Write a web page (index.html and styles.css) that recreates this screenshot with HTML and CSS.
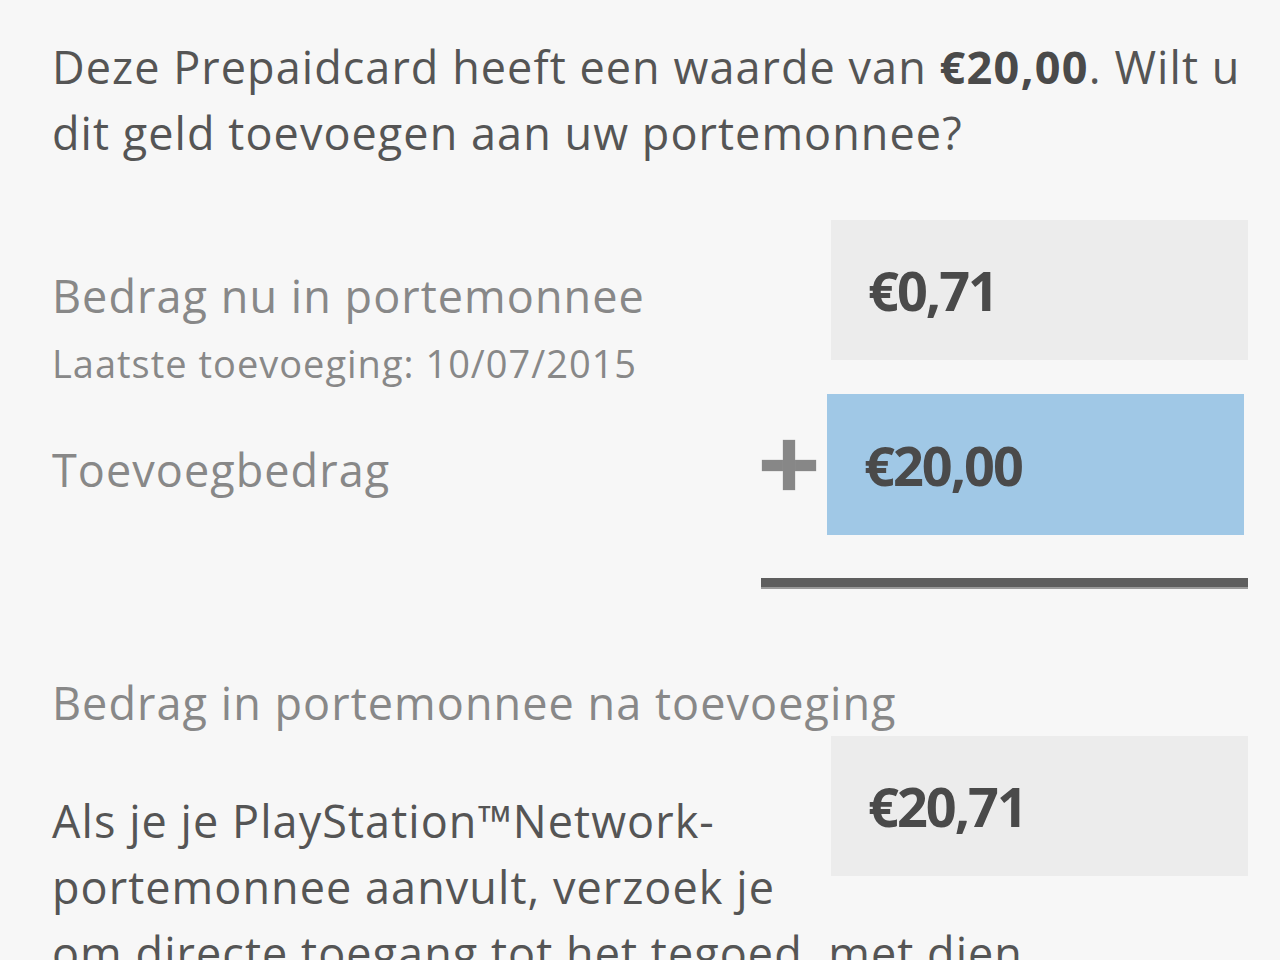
FILE: index.html
```html
<!DOCTYPE html>
<html lang="nl">
<head>
<meta charset="utf-8">
<title>Prepaidcard</title>
<link rel="stylesheet" href="styles.css">
</head>
<body>
<main class="page">
  <p class="intro">Deze Prepaidcard heeft een waarde van <strong>€20,00</strong>. Wilt u dit geld toevoegen aan uw portemonnee?</p>

  <div class="row row-current">
    <div class="label-block">
      <div class="label">Bedrag nu in portemonnee</div>
      <div class="sublabel">Laatste toevoeging: 10/07/2015</div>
    </div>
    <div class="amount amount-grey">€0,71</div>
  </div>

  <div class="row row-add">
    <div class="label-block">
      <div class="label">Toevoegbedrag</div>
    </div>
    <div class="add-wrap">
      <span class="plus" aria-hidden="true"></span>
      <div class="amount amount-blue">€20,00</div>
    </div>
  </div>

  <div class="sum-line"></div>

  <div class="label label-after">Bedrag in portemonnee na toevoeging</div>
  <div class="amount amount-grey amount-float">€20,71</div>
  <p class="note">Als je je PlayStation™Network-portemonnee aanvult, verzoek je om directe toegang tot het tegoed, met dien verstande dat je afstand doet van je herroepingsrecht.</p>
</main>
</body>
</html>
```

FILE: styles.css
```css
html, body {
  margin: 0;
  padding: 0;
  background: #f7f7f7;
  overflow: hidden;
}

.page {
  font-family: "Open Sans", "Liberation Sans", sans-serif;
  font-size: 45px;
  line-height: 66px;
  letter-spacing: 1.05px;
  color: #555555;
  padding: 34px 32px 0 52px;
}

.intro {
  margin: 0;
}

.intro strong {
  font-weight: 700;
  letter-spacing: 1.3px;
  color: #4a4a4a;
}

.row {
  display: flex;
  justify-content: space-between;
  align-items: flex-start;
}

.row-current {
  margin-top: 54px;
}

.row-add {
  margin-top: 9px;
}

.label-block {
  padding-top: 43px;
}

.label {
  color: #888888;
}

.sublabel {
  font-size: 38px;
  line-height: 44px;
  letter-spacing: 1px;
  margin-top: 12px;
  color: #888888;
}

.amount {
  box-sizing: border-box;
  width: 417px;
  height: 140px;
  padding-left: 37px;
  display: flex;
  align-items: center;
  font-weight: 700;
  font-size: 54px;
  letter-spacing: -2px;
  color: #4a4a4a;
}

.amount-grey {
  background: #ececec;
}

.amount-blue {
  background: #a0c8e6;
  height: 141px;
}

.add-wrap {
  display: flex;
  align-items: center;
  margin-right: 4px;
}

.plus {
  position: relative;
  width: 54px;
  height: 50px;
  margin-right: 11px;
}

.plus::before,
.plus::after {
  content: "";
  position: absolute;
  background: #878787;
  box-shadow: 0 0 1px #9a9a9a;
}

.plus::before {
  left: 0;
  right: 0;
  top: 20px;
  height: 11px;
}

.plus::after {
  top: 0;
  bottom: 0;
  left: 21px;
  width: 12px;
}

.sum-line {
  margin: 43px 0 0 auto;
  width: 487px;
  height: 9px;
  background: #5e5e5e;
  border-bottom: 2px solid #9a9a9a;
}

.label-after {
  margin-top: 81px;
}

.amount-float {
  float: right;
  margin-left: 20px;
}

.note {
  margin: 52px 0 0;
  padding-right: 40px;
  color: #555555;
}
```
